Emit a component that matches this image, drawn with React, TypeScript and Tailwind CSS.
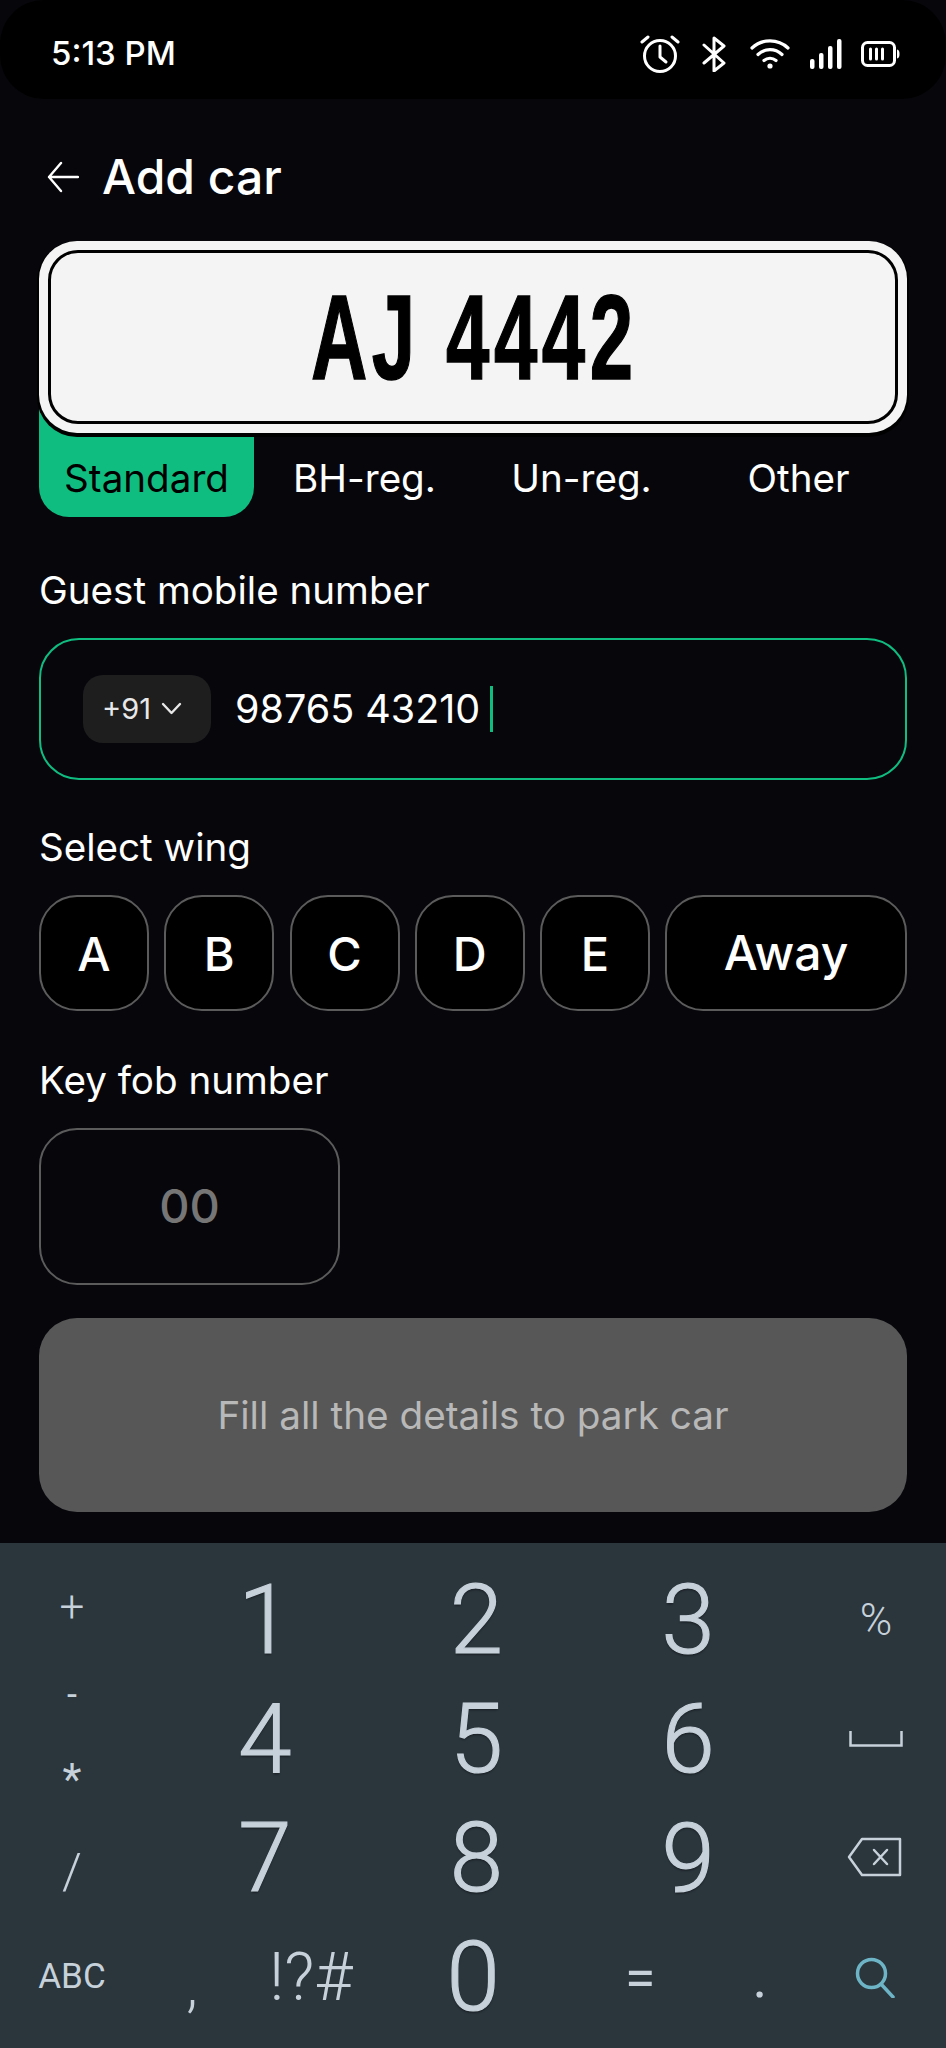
const tabs = ['Standard', 'BH-reg.', 'Un-reg.', 'Other']
const wings = ['A', 'B', 'C', 'D', 'E']
const digits = ['1', '2', '3', '4', '5', '6', '7', '8', '9']

function StatusIcons() {
  return (
    <div className="flex items-center">
      {/* Alarm */}
      <svg width="40" height="40" viewBox="0 0 40 40" fill="none" stroke="white" strokeWidth="3" strokeLinecap="round" strokeLinejoin="round">
        <circle cx="20" cy="22" r="15.5" />
        <path d="M20 12v11l6 5" />
        <path d="M2 8l6-5M38 8l-6-5" />
      </svg>
      {/* Bluetooth */}
      <svg width="26" height="36" viewBox="0 0 26 36" fill="none" stroke="white" strokeWidth="3" strokeLinejoin="round" strokeLinecap="round" className="ml-[22px]">
        <path d="M2 9l20 18-10 8V2l10 8L2 27" />
      </svg>
      {/* Wifi */}
      <svg width="40" height="31" viewBox="0 0 40 31" fill="none" stroke="white" strokeWidth="3.2" strokeLinecap="round" className="ml-[22px]">
        <path d="M2 10c10-9.5 26-9.5 36 0" />
        <path d="M8 16.5c7-6.5 17-6.5 24 0" />
        <path d="M14 22.5c3.5-3 8.500-3 12 0" />
        <circle cx="20" cy="28" r="2.600" fill="white" stroke="none" />
      </svg>
      {/* Signal */}
      <svg width="32" height="30" viewBox="0 0 32 30" fill="white" className="ml-[20px]">
        <rect x="0" y="20" width="4.500" height="10" rx="2" />
        <rect x="9" y="14" width="4.500" height="16" rx="2" />
        <rect x="18" y="7" width="4.500" height="23" rx="2" />
        <rect x="27" y="0" width="4.500" height="30" rx="2" />
      </svg>
      {/* Battery */}
      <svg width="39" height="26" viewBox="0 0 39 26" fill="none" className="ml-[19px]">
        <rect x="1.500" y="1.500" width="32" height="23" rx="5" stroke="white" strokeWidth="3" />
        <path d="M36 8.500c2 .5 2.500 2 2.500 4.500s-.5 4-2.500 4.500z" fill="white" />
        <path d="M9.500 8v10M15.500 8v10M21.500 8v10" stroke="white" strokeWidth="3" strokeLinecap="round" />
      </svg>
    </div>
  )
}

function Keyboard() {
  return (
    <div className="mt-[31px] h-[505px] overflow-hidden bg-[#2a353c] font-['Roboto',sans-serif] font-light text-[#c6d1da]">
      <div className="flex h-[375px]">
        {/* Operators */}
        <div className="flex w-[144px] flex-col items-center text-[44px] leading-[40px]">
          <span className="mt-[44px] h-[40px]">+</span>
          <span className="mt-[48px] h-[40px] text-[36px] font-normal">-</span>
          <span className="mt-[45px] h-[40px] font-normal">*</span>
          <span className="mt-[52px] h-[40px] text-[50px]">/</span>
        </div>
        {/* Digits */}
        <div className="ml-[15px] grid w-[635px] grid-cols-3 auto-rows-[119px] pt-[18px] text-[96px] leading-[119px] [-webkit-text-stroke:1.2px_#c6d1da]">
          {digits.map((d) => (
            <span key={d} className="text-center [text-shadow:0_2px_2px_rgba(0,0,0,0.35)]">
              {d}
            </span>
          ))}
        </div>
        {/* Right keys */}
        <div className="grid w-[152px] auto-rows-[119px] justify-items-center pl-[12px] pt-[16px]">
          <span className="pt-[2px] text-[44px] leading-[119px]">%</span>
          <div className="flex items-center pt-[2px]">
            <svg width="54" height="16" viewBox="0 0 54 16" fill="none" stroke="#c6d1da" strokeWidth="2.500">
              <path d="M1.500 0v14.500h51V0" />
            </svg>
          </div>
          <div className="mr-[4px] flex items-center pt-[1px]">
            <svg width="55" height="40" viewBox="0 0 55 40" fill="none" stroke="#c6d1da" strokeWidth="2.500" strokeLinejoin="round">
              <path d="M15 2h38v36H15L2 20z" />
              <path d="M27 13l13 14M40 13L27 27" strokeLinecap="round" />
            </svg>
          </div>
        </div>
      </div>
      {/* Bottom row */}
      <div className="grid h-[119px] grid-cols-[144px_96px_142px_182px_152px_88px_142px] items-center justify-items-center text-center">
        <span className="text-[35px] font-normal">ABC</span>
        <span className="pt-[16px] text-[60px] leading-none">,</span>
        <span className="text-[66px] leading-none">!?#</span>
        <span className="text-[96px] leading-[119px] [-webkit-text-stroke:1.2px_#c6d1da] [text-shadow:0_2px_2px_rgba(0,0,0,0.35)]">0</span>
        <span className="text-[56px] font-normal leading-none">=</span>
        <span className="text-[56px] font-normal leading-none">.</span>
        <svg width="40" height="41" viewBox="0 0 40 41" fill="none" stroke="#6db4c6" strokeWidth="3.500" strokeLinecap="round">
          <circle cx="16.500" cy="16.500" r="14" />
          <path d="M26 27l12 13" />
        </svg>
      </div>
    </div>
  )
}

export default function App() {
  return (
    <div className="flex h-[2048px] w-[946px] flex-col overflow-hidden bg-[#07060b] font-['Inter',sans-serif] text-white">
      {/* Status bar */}
      <div className="flex h-[99px] items-center justify-between rounded-[44px] bg-black pl-[51px] pr-[46px] pt-[8px]">
        <span className="text-[33px] font-medium leading-none">5:13 PM</span>
        <StatusIcons />
      </div>

      {/* Header */}
      <div className="mt-[48px] flex h-[60px] items-center pl-[47px]">
        <svg width="32" height="32" viewBox="0 0 32 32" fill="none" stroke="white" strokeWidth="2.400" strokeLinecap="round" strokeLinejoin="round">
          <path d="M31 16H2M14 2L2 16l12 14" />
        </svg>
        <span className="ml-[23px] text-[48px] font-medium leading-none">Add car</span>
      </div>

      <div className="flex flex-col px-[39px]">
        {/* Plate */}
        <div className="relative z-10 mt-[34px] h-[192px] rounded-[38px] bg-[#f4f4f4] p-[9px] shadow-[0_2px_0_2px_#000]">
          <div className="flex h-full items-center justify-center rounded-[30px] border-[3px] border-black">
            <span className="ml-[2px] inline-block scale-x-[0.65] font-['Liberation_Sans',sans-serif] text-[120px] font-bold leading-none tracking-[7px] text-black [-webkit-text-stroke:1.5px_black]">
              AJ 4442
            </span>
          </div>
        </div>

        {/* Plate type tabs */}
        <div className="-mt-[33px] flex h-[117px]">
          {tabs.map((tab, i) => (
            <div
              key={tab}
              className={
                i === 0
                  ? 'mr-[2px] flex w-[215px] items-end justify-center rounded-b-[30px] bg-[#10bd80] pb-[15px] text-[38.600px] leading-[48px] text-black'
                  : 'flex w-[217px] items-end justify-center pb-[15px] text-[38.600px] leading-[48px]'
              }
            >
              {tab}
            </div>
          ))}
        </div>

        {/* Guest mobile */}
        <label className="mt-[49px] text-[38.600px] leading-[48px]">Guest mobile number</label>
        <div className="mt-[24px] flex h-[142px] items-center rounded-[40px] border-2 border-[#10bd80] pl-[42px]">
          <div className="flex h-[68px] w-[128px] items-center justify-center gap-[10px] rounded-[20px] bg-[#1e1e1e] pb-[2px] pr-[10px]">
            <span className="text-[29px] leading-none text-[#e8e8e8]">+91</span>
            <svg width="21" height="13" viewBox="0 0 21 13" fill="none" stroke="#e8e8e8" strokeWidth="2.400" strokeLinecap="round" strokeLinejoin="round">
              <path d="M2 2l8.500 9L19 2" />
            </svg>
          </div>
          <span className="ml-[24px] pt-[2px] text-[39.500px] leading-none">98765 43210</span>
          <span className="ml-[10px] h-[46px] w-[3px] bg-[#10bd80]" />
        </div>

        {/* Wing */}
        <label className="mt-[43px] text-[38.600px] leading-[48px]">Select wing</label>
        <div className="mt-[24px] flex gap-[15.250px]">
          {wings.map((w) => (
            <button key={w} className="flex h-[116px] w-[110px] items-center justify-center rounded-[38px] border-2 border-[#5b5b5b] bg-black text-[47px] font-medium leading-none">
              {w}
            </button>
          ))}
          <button className="flex h-[116px] flex-1 items-center justify-center rounded-[38px] border-2 border-[#5b5b5b] bg-black text-[48px] font-medium leading-none">
            Away
          </button>
        </div>

        {/* Key fob */}
        <label className="mt-[45px] text-[38.600px] leading-[48px]">Key fob number</label>
        <div className="mt-[24px] flex h-[157px] w-[301px] items-center justify-center rounded-[38px] border-2 border-[#5b5b5b] pb-[2px] text-[47px] font-medium leading-none text-[#767676]">
          00
        </div>

        {/* Submit */}
        <button className="mt-[33px] h-[194px] w-full rounded-[38px] bg-[#575757] text-[38.700px] leading-none text-[#b8b8b8]">
          Fill all the details to park car
        </button>
      </div>

      <Keyboard />
    </div>
  )
}
